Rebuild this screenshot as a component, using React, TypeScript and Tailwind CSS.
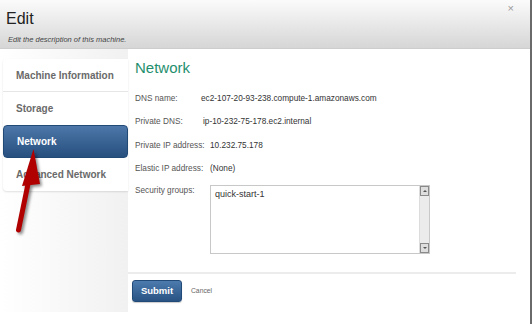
import React from "react";

const rows: { label: string; value: string; w: string }[] = [
  { label: "DNS name:", value: "ec2-107-20-93-238.compute-1.amazonaws.com", w: "w-[66px]" },
  { label: "Private DNS:", value: "ip-10-232-75-178.ec2.internal", w: "w-[68px]" },
  { label: "Private IP address:", value: "10.232.75.178", w: "w-[75px]" },
  { label: "Elastic IP address:", value: "(None)", w: "w-[75px]" },
];

const menu = ["Machine Information", "Storage", "Network", "Advanced Network"];

export default function App() {
  return (
    <div
      className="relative w-[532px] h-[324px] overflow-hidden bg-white border-r-2 border-[#6a6a6a]"
      style={{ fontFamily: '"Liberation Sans", Arial, sans-serif' }}
    >
      {/* Header */}
      <div className="relative h-[49px] bg-gradient-to-b from-[#fbfbfb] to-[#d6d6d6] border-b border-[#cdcdcd] px-[6px] pt-[11px]">
        <div className="text-[16px] leading-none text-[#222]">Edit</div>
        <div className="mt-[9px] ml-[2px] text-[7.5px] leading-none italic text-[#444]">
          Edit the description of this machine.
        </div>
        <div className="absolute right-[16px] top-[3px] text-[11px] leading-none text-[#9a9a9a]">×</div>
      </div>

      {/* Body */}
      <div className="flex">
        {/* Sidebar */}
        <div className="w-[128px] h-[263px] bg-gradient-to-r from-white to-[#f1f1f1] pt-[10px] pl-[3px]">
          <div className="bg-white rounded-l-[4px] shadow-[0_1px_2px_rgba(0,0,0,0.12)]">
            {menu.map((m, i) =>
              m === "Network" ? (
                <div
                  key={m}
                  className="h-[33px] flex items-center pl-[13px] rounded-[4px] bg-gradient-to-b from-[#4c77a8] to-[#27507f] border border-[#224a77] text-white font-bold text-[10px]"
                >
                  {m}
                </div>
              ) : (
                <div
                  key={m}
                  className={`h-[33px] flex items-center pl-[13px] text-[10px] font-bold text-[#6a6a6a] ${
                    i === 0 ? "border-b border-[#e6e6e6]" : ""
                  }`}
                >
                  {m}
                </div>
              )
            )}
          </div>
        </div>

        {/* Content */}
        <div className="flex-1 pt-[11px]">
          <div className="pl-[7px]">
            <div className="text-[15px] leading-none text-[#1f8f6e]">Network</div>
            <div className="mt-[12px]">
              {rows.map((r) => (
                <div key={r.label} className="h-[23.5px] flex items-center text-[8.25px] leading-none text-[#555] whitespace-nowrap">
                  <div className={`${r.w} shrink-0`}>{r.label}</div>
                  <div className="text-[#333]">{r.value}</div>
                </div>
              ))}
              <div className="flex items-start pt-[4px] text-[8.25px] text-[#555] whitespace-nowrap">
                <div className="w-[75px] shrink-0 leading-[10px] mt-[1px]">Security groups:</div>
                <div className="relative w-[220px] h-[69px] border border-[#c8c8c8] bg-white">
                  <div className="pl-[4px] pt-[3px] text-[9px] leading-[11px] text-[#333]">quick-start-1</div>
                  <div className="absolute right-0 top-0 bottom-0 w-[10px] bg-[#ebebeb] border-l border-[#dcdcdc] flex flex-col justify-between">
                    <div className="h-[10px] bg-[#dedede] border border-[#8a8a8a] flex items-center justify-center">
                      <div className="w-0 h-0 border-l-[2px] border-r-[2px] border-b-[2px] border-l-transparent border-r-transparent border-b-[#555]" />
                    </div>
                    <div className="h-[10px] bg-[#dedede] border border-[#8a8a8a] flex items-center justify-center">
                      <div className="w-0 h-0 border-l-[2px] border-r-[2px] border-t-[2px] border-l-transparent border-r-transparent border-t-[#555]" />
                    </div>
                  </div>
                </div>
              </div>
            </div>
          </div>
          <div className="mt-[18px] mr-[14px] border-t-2 border-[#ececec]" />
          <div className="flex items-center mt-[6px] ml-[4px]">
            <div className="w-[50px] h-[22px] rounded-[3px] bg-gradient-to-b from-[#4d7bae] to-[#285383] border border-[#214a78] flex items-center justify-center text-white font-bold text-[9.5px] shadow-[0_1px_1px_rgba(0,0,0,0.2)]">
              Submit
            </div>
            <div className="ml-[9px] text-[6.75px] text-[#666]">Cancel</div>
          </div>
        </div>
      </div>

      {/* Arrow overlay */}
      <svg
        className="absolute left-0 top-0 pointer-events-none"
        width="60"
        height="240"
        viewBox="0 0 60 240"
        style={{ filter: "drop-shadow(2px 2px 1.5px rgba(0,0,0,0.45))" }}
      >
        <line x1="28" y1="184" x2="18.5" y2="230" stroke="#b00000" strokeWidth="5" strokeLinecap="round" />
        <polygon points="33.5,149 22,186 40,184" fill="#b00000" />
      </svg>
    </div>
  );
}
